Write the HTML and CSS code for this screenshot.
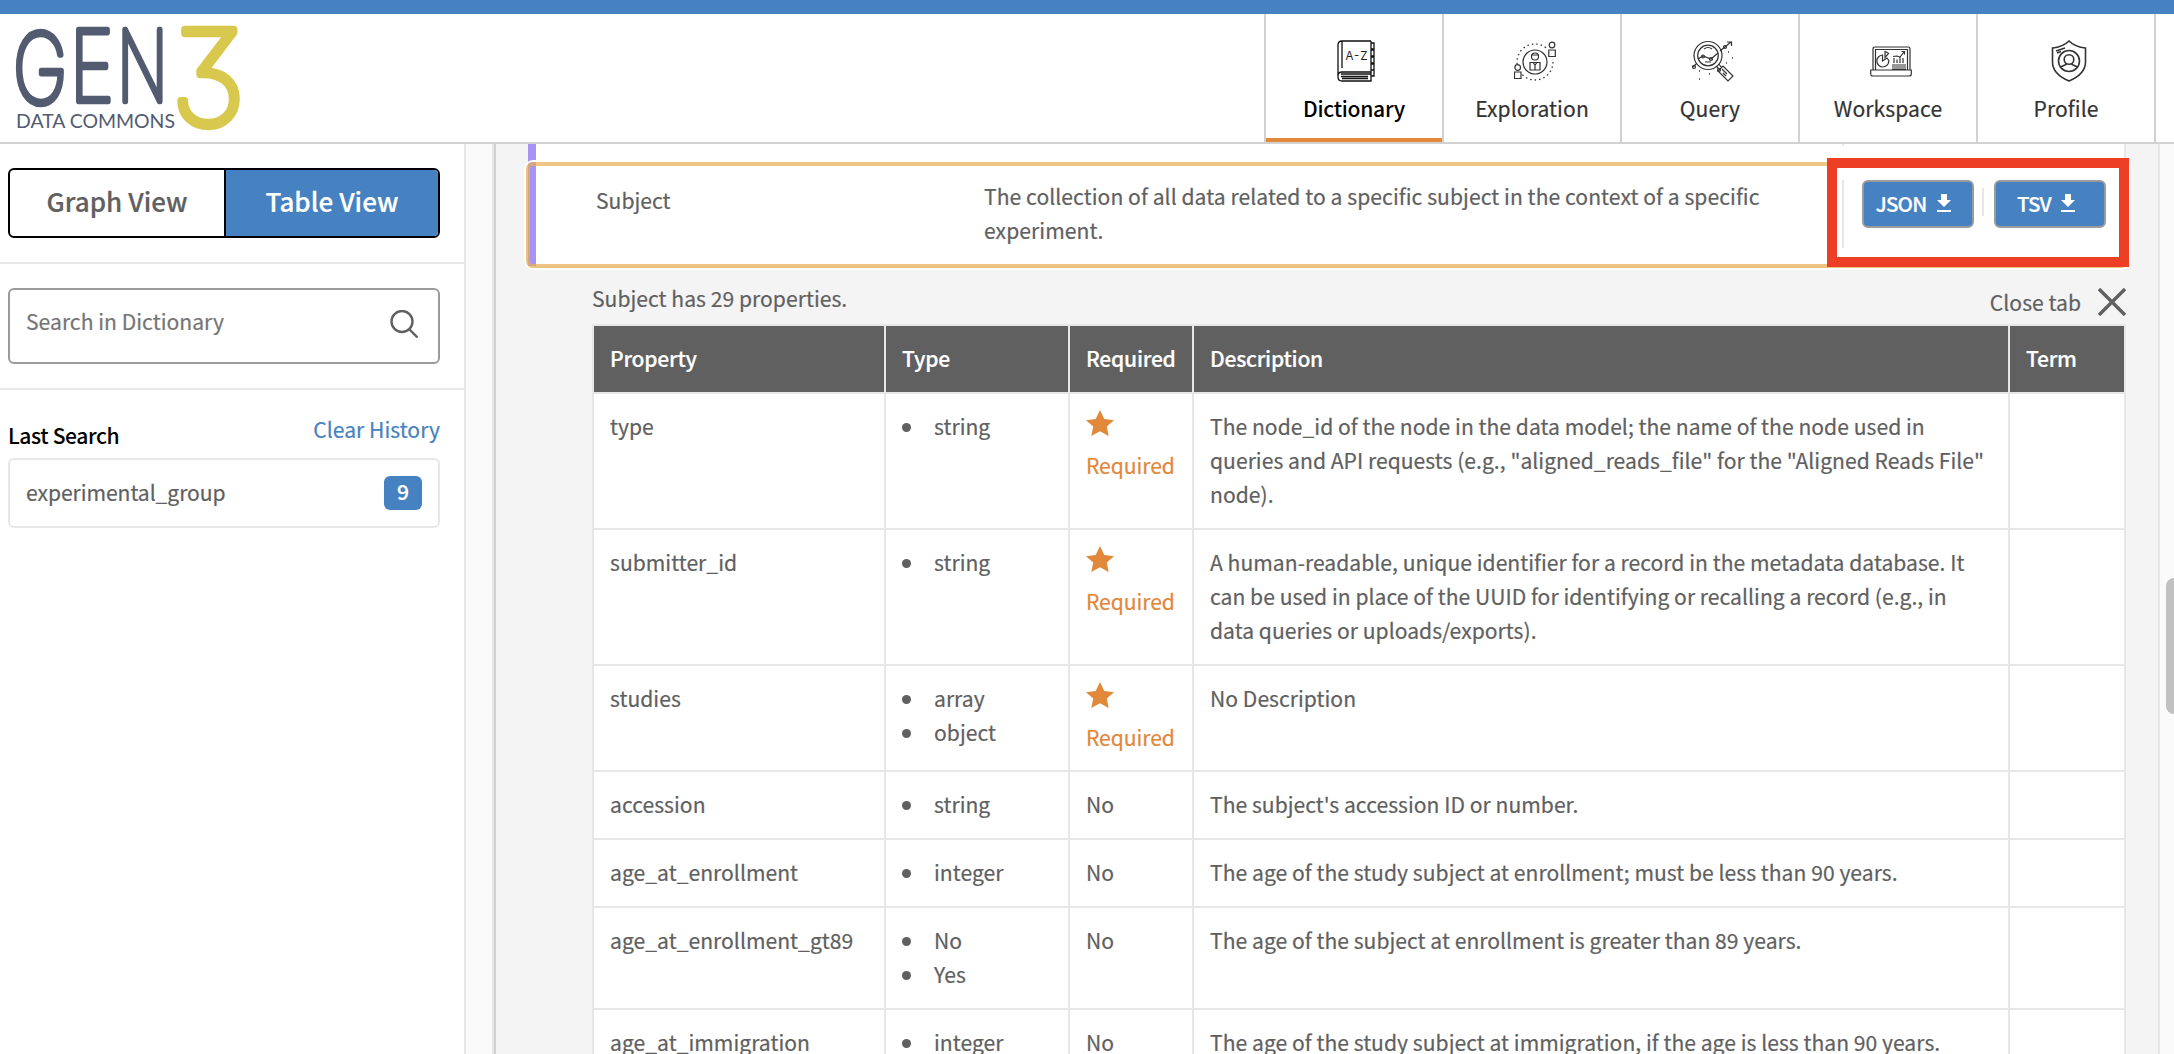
FILE: index.html
```html
<!DOCTYPE html>
<html lang="en">
<head>
<meta charset="utf-8">
<title>Gen3 Data Commons - Dictionary</title>
<link rel="stylesheet" href="styles.css">
</head>
<body>
<div class="top-bar"></div>
<header class="header">
  <svg class="logo" width="260" height="128" viewBox="0 14 260 128" role="img" aria-label="Gen3 Data Commons">
    <g class="logo-word">
      <text transform="translate(13 102.500) scale(.76 1)">G</text>
      <text transform="translate(70 101) scale(.77 1)">E</text>
      <text transform="translate(117 101) scale(.68 1)">N</text>
    </g>
    <text class="logo-three" transform="translate(171.500 125) scale(.96 1)">3</text>
    <text class="logo-sub" x="16" y="127.500" textLength="159" lengthAdjust="spacingAndGlyphs">DATA COMMONS</text>
  </svg>
  <nav class="nav">
    <a class="nav-item nav-item-active">
      <svg class="nav-icon nav-icon-book" viewBox="0 0 42 42"><path d="M34 1H5Q1 1 1 5V37Q1 41 5 41H34V32H5Q1 32 1 36M5 1V28M34 1V32M4 34H34M4 36.500H31M5 38.500H31M34 3H37V9H34M34 10H37V16H34M34 17H37V23H34M34 24H37V30H34M37 30V36H34"/><text x="8.500" y="20" textLength="22" class="nav-icon-text">A-Z</text></svg>
      <span>Dictionary</span>
    </a>
    <a class="nav-item">
      <svg class="nav-icon" viewBox="0 0 42 42"><circle cx="21" cy="22" r="18" stroke-dasharray="1.500 3" stroke-width="1.300"/><circle cx="21" cy="22" r="12" fill="#fff"/><circle cx="21" cy="16.500" r="3.500"/><path d="M17 15H25M16 22.500H26V30H16ZM19 22.500L21 25L23 22.500M21 25V30"/><g fill="#fff"><path d="M-1 31H8V40H-1ZM33 9H43V19H33Z" stroke="none"/><circle cx="3.700" cy="27.500" r="2.800"/><path d="M.5 32H7V38.500H.5ZM34.800 10H41.300V16.500H34.800Z"/><circle cx="38" cy="5" r="2.800"/></g></svg>
      <span>Exploration</span>
    </a>
    <a class="nav-item">
      <svg class="nav-icon" viewBox="0 0 42 42"><circle cx="16" cy="15.500" r="14"/><circle cx="16" cy="15.500" r="10.300"/><path d="M6 19L11 16L19 19L26 13M12 9Q16 6 20 9M13 22H19M24 26L27 29M27 24L29 27M26 31L31 26L41 36L36 41ZM30 29L35 34M31 33L34 36M28 11L39 2M35 2H39.500V6M4 24L1 27"/><circle cx="11" cy="16.500" r="1.500"/><circle cx="19" cy="19" r="1.500"/><circle cx="33" cy="7" r="1.500"/><circle cx="2" cy="27" r="1.500"/><circle cx="27" cy="30" r="1.500"/><path d="M36 12h1M40 18h1M34 23h1M7 31h1M17 34h1M7 39h1" stroke-width="1.500"/></svg>
      <span>Query</span>
    </a>
    <a class="nav-item">
      <svg class="nav-icon" viewBox="0 0 42 42"><path d="M3 30V9Q3 7 5 7H38Q40 7 40 9V30M5.500 30V9.500H37.500V30M.7 30H41.300V34Q41.300 36 39 36H3Q.7 36 .7 34ZM22 27H36M22 29H36"/><path d="M12.500 15A6 6 0 1 0 18.800 20.500L17 18L12.500 21ZM15 11.500V17.500L18.500 13.500Q17 12 15 11.500ZM24 23V18M27 23V19.500M30 23V17M33 23V18M23 16.500L27 16L30 17L34 12M31.500 11.500H34.500V14.500M22 25H36"/></svg>
      <span>Workspace</span>
    </a>
    <a class="nav-item">
      <svg class="nav-icon nav-icon-bold" viewBox="0 0 42 42"><path d="M21 1Q15 7 4.500 8V22Q4.500 34 21 41Q37.500 34 37.500 22V8Q27 7 21 1ZM8 11L17 8M9 13L13 11.500"/><circle cx="21" cy="21" r="10.500"/><circle cx="21" cy="19.500" r="4.800"/><path d="M12.500 27L18 24.500V23M29.500 27L24 24.500V23"/></svg>
      <span>Profile</span>
    </a>
  </nav>
</header>
<div class="page">
  <aside class="sidebar">
    <section class="panel panel-toggle">
      <div class="toggle"><button class="toggle-btn">Graph View</button><button class="toggle-btn toggle-btn-on">Table View</button></div>
    </section>
    <section class="panel panel-search">
      <div class="search"><span class="search-hint">Search in Dictionary</span><svg class="search-icon" width="28" height="28" viewBox="0 0 28 28"><circle cx="12" cy="11.500" r="10.500"/><path d="M19 19L27.500 27.500"/></svg></div>
    </section>
    <section class="history">
      <div class="history-head"><b class="history-title">Last Search</b><a class="history-clear">Clear History</a></div>
      <div class="history-item"><span>experimental_group</span><span class="badge">9</span></div>
    </section>
  </aside>
  <main class="main">
    <div class="node-row node-row-prev"><div class="node-rule"></div></div>
    <div class="node-row node-row-focus">
      <div class="node-name">Subject</div>
      <div class="node-desc">The collection of all data related to a specific subject in the context of a specific experiment.</div>
      <div class="node-actions">
        <button class="download">JSON<svg width="14" height="18" viewBox="0 0 14 18"><path d="M4 0H10V6H14L7 13L0 6H4ZM0 16H14V18H0Z"/></svg></button>
        <i class="actions-rule"></i>
        <button class="download">TSV<svg width="14" height="18" viewBox="0 0 14 18"><path d="M4 0H10V6H14L7 13L0 6H4ZM0 16H14V18H0Z"/></svg></button>
        <div class="callout"></div>
      </div>
    </div>
    <div class="details">
      <div class="details-head">
        <span>Subject has 29 properties.</span>
        <span class="close">Close tab<svg width="28" height="28" viewBox="0 0 28 28"><path d="M1 1L27 27M27 1L1 27"/></svg></span>
      </div>
      <table class="props">
        <colgroup><col class="c-prop"><col class="c-type"><col class="c-req"><col class="c-desc"><col class="c-term"></colgroup>
        <thead><tr><th>Property</th><th>Type</th><th>Required</th><th>Description</th><th>Term</th></tr></thead>
        <tbody>
          <tr><td>type</td><td><ul><li>string</li></ul></td><td class="req"><svg class="star" viewBox="0 0 28 26"><path d="M14 0L18.300 9L28 10.200L20.800 16.500L22.700 26L14 21.300L5.300 26L7.200 16.500L0 10.200L9.700 9Z"/></svg><span>Required</span></td><td>The node_id of the node in the data model; the name of the node used in queries and API requests (e.g., "aligned_reads_file" for the "Aligned Reads File" node).</td><td></td></tr>
          <tr><td>submitter_id</td><td><ul><li>string</li></ul></td><td class="req"><svg class="star" viewBox="0 0 28 26"><path d="M14 0L18.300 9L28 10.200L20.800 16.500L22.700 26L14 21.300L5.300 26L7.200 16.500L0 10.200L9.700 9Z"/></svg><span>Required</span></td><td>A human-readable, unique identifier for a record in the metadata database. It can be used in place of the UUID for identifying or recalling a record (e.g., in data queries or uploads/exports).</td><td></td></tr>
          <tr><td>studies</td><td><ul><li>array</li><li>object</li></ul></td><td class="req"><svg class="star" viewBox="0 0 28 26"><path d="M14 0L18.300 9L28 10.200L20.800 16.500L22.700 26L14 21.300L5.300 26L7.200 16.500L0 10.200L9.700 9Z"/></svg><span>Required</span></td><td>No Description</td><td></td></tr>
          <tr><td>accession</td><td><ul><li>string</li></ul></td><td>No</td><td>The subject's accession ID or number.</td><td></td></tr>
          <tr><td>age_at_enrollment</td><td><ul><li>integer</li></ul></td><td>No</td><td>The age of the study subject at enrollment; must be less than 90 years.</td><td></td></tr>
          <tr><td>age_at_enrollment_gt89</td><td><ul><li>No</li><li>Yes</li></ul></td><td>No</td><td>The age of the subject at enrollment is greater than 89 years.</td><td></td></tr>
          <tr><td>age_at_immigration</td><td><ul><li>integer</li></ul></td><td>No</td><td>The age of the study subject at immigration, if the age is less than 90 years.</td><td></td></tr>
        </tbody>
      </table>
    </div>
  </main>
  <div class="gutter"><div class="thumb"></div></div>
</div>
</body>
</html>
```
FILE: styles.css
```css
* { box-sizing: border-box; }
body {
  margin: 0; width: 2174px; height: 1054px; overflow: hidden;
  display: flex; flex-direction: column; background: #fff; color: #606060;
  font-family: "Noto Sans CJK SC", "Noto Sans", sans-serif;
  font-size: 21.1px; line-height: 34px; letter-spacing: .03px;
  -webkit-text-stroke-width: .2px;
}
button { font: inherit; letter-spacing: inherit; color: inherit; background: none; padding: 0; }
svg { display: block; flex: none; }

.top-bar { flex: none; height: 14px; background: #4682c1; }
.header { flex: none; height: 130px; display: flex; justify-content: space-between; border-bottom: 2px solid #d1d1d1; }
.logo { overflow: visible; }
.logo-word { font: 100 97px Inter, sans-serif; letter-spacing: 0; fill: #525b70; stroke: #525b70; stroke-width: 6.4px; stroke-linejoin: round; }
.logo-three { font: 100 131px Inter, sans-serif; font-feature-settings: "cv09"; letter-spacing: 0; fill: #d8c94e; stroke: #d8c94e; stroke-width: 8.4px; stroke-linejoin: round; }
.logo-sub { font: 400 19.5px Lato, sans-serif; letter-spacing: 0; fill: #525b70; }
.nav { display: flex; padding-right: 18px; border-left: 2px solid #d1d1d1; }
.nav-item { width: 178px; padding-top: 26px; display: flex; flex-direction: column; align-items: center; gap: 9px; color: #333; border-right: 2px solid #d1d1d1; letter-spacing: .1px; }
.nav-item-active { color: #000; font-weight: 500; letter-spacing: -.3px; -webkit-text-stroke-width: 0; border-bottom: 4px solid #e1883b; border-right: 0; width: 176px; margin-right: 2px; box-shadow: 2px 0 #d1d1d1, 2px 4px #d1d1d1; }
.nav-icon { width: 42px; height: 42px; margin-left: 6px; fill: none; stroke: #333; stroke-width: 1.2; }
.nav-icon-book { margin-left: 8px; stroke: #111; stroke-width: 1.3; }
.nav-icon-bold { stroke-width: 1.6; }
.nav-icon-text { font: 11.5px Inter, sans-serif; letter-spacing: 0; fill: #222; stroke: none; }

.page { flex: 1; min-height: 0; display: flex; background: #fafafa; }
.sidebar { width: 466px; background: #fff; border-right: 2px solid #e7e7e7; }
.panel { padding: 24px 24px 24px 8px; border-bottom: 2px solid #e7e7e7; }
.toggle { display: flex; height: 70px; border: 2px solid #000; border-radius: 6px; overflow: hidden; }
.toggle-btn { flex: 1; padding-bottom: 4px; border: 0; font-size: 26px; font-weight: 500; }
.toggle-btn:first-child { flex: 0 0 216px; border-right: 2px solid #000; }
.toggle-btn-on { background: #4682c1; color: #fff; }
.search { height: 76px; padding: 0 20px 0 16px; display: flex; justify-content: space-between; align-items: center; border: 2px solid #9b9b9b; border-radius: 6px; }
.search-hint { padding-bottom: 10px; color: #757575; }
.search-icon { fill: none; stroke: #606060; stroke-width: 2.4; margin-bottom: 4px; }
.history { padding: 22px 24px 0 8px; }
.history-head { height: 46px; display: flex; justify-content: space-between; }
.history-title { color: #000; font-weight: 500; padding-top: 6px; letter-spacing: -.4px; -webkit-text-stroke-width: 0; }
.history-clear { color: #4682c1; }
.history-item { height: 70px; padding: 0 16px; display: flex; justify-content: space-between; align-items: center; border: 2px solid #e7e7e7; border-radius: 6px; }
.history-item > span:first-child { padding-bottom: 3px; letter-spacing: -.05px; }
.badge { width: 38px; height: 34px; line-height: 31px; text-align: center; background: #4682c1; color: #fff; border-radius: 6px; font-weight: 500; }

.main { flex: 1; margin-left: 26px; padding: 0 32px; background: #f4f4f4; border-left: 2px solid #e7e7e7; border-right: 2px solid #e7e7e7; box-shadow: inset 2px 0 #d1d1d1; }
.node-row { margin-left: 2px; display: flex; background: #fff; border-left: 8px solid #a792f8; }
.node-row-prev { height: 18px; padding-left: 1306px; border-right: 2px solid #e7e7e7; }
.node-rule { width: 2px; height: 2px; background: #e7e7e7; }
.node-row-focus { position: relative; height: 104px; padding: 17px 0 0 60px; border-right: 2px solid #e7e7e7; }
.node-row-focus::after { content: ""; position: absolute; inset: 0 -4px -2px -10px; border: 4px solid rgba(232, 175, 82, .72); border-radius: 7px; box-shadow: 0 0 0 2px #fff; }
.node-name { width: 388px; padding-top: 4px; }
.node-desc { width: 798px; letter-spacing: .06px; }
.node-actions { position: relative; z-index: 1; height: 68px; margin: 1px 0 0 60px; padding-left: 18px; display: flex; align-items: flex-start; border-left: 2px solid #e7e7e7; }
.download { width: 112px; height: 48px; padding: 0 10px 2px 0; display: flex; align-items: center; justify-content: center; gap: 10px; background: #4682c1; color: #fff; border: 2px solid #9b9b9b; border-radius: 6px; font-size: 20.5px; font-weight: 500; letter-spacing: -.8px; }
.download:last-of-type { padding-right: 8px; }
.download svg { fill: #fff; margin-bottom: 1px; }
.actions-rule { width: 2px; height: 28px; margin: 8px 10px 0 8px; background: #e7e7e7; }
.callout { position: absolute; left: -17px; top: -22px; width: 302px; height: 109px; border: 10px solid #ec3f25; }

.details { padding-left: 66px; }
.details-head { height: 58px; padding-top: 15px; display: flex; justify-content: space-between; }
.close { display: flex; gap: 17px; padding-top: 4px; }
.close svg { fill: none; stroke: #606060; stroke-width: 3.4; margin-top: 3px; }
.props { width: 1534px; table-layout: fixed; border-collapse: collapse; background: #fff; }
.c-prop { width: 292px; } .c-type { width: 184px; } .c-req { width: 124px; } .c-desc { width: 816px; } .c-term { width: 116px; }
.props th, .props td { padding: 15px 16px 17px; border: 2px solid #e7e7e7; text-align: left; vertical-align: top; }
.props th { background: #606060; color: #fff; font-weight: 500; letter-spacing: -.25px; }
.props ul { margin: 0; padding: 0; list-style: none; }
.props li { display: flex; align-items: center; gap: 24px; }
.props li::before { content: ""; width: 9px; height: 9px; margin: 2px -1px 0 0; border-radius: 50%; background: #606060; }
.props .req { padding-bottom: 16px; color: #e1883b; white-space: nowrap; letter-spacing: -.05px; }
.props .req span { display: block; }
.star { width: 28px; height: 26px; margin: 1px 0 12px; fill: #e1883b; }

.gutter { position: relative; width: 14px; flex: none; padding-top: 434px; }
.thumb { width: 8px; height: 136px; margin-left: 6px; border-radius: 8px 0 0 8px; background: #c1c1c1; }
```
